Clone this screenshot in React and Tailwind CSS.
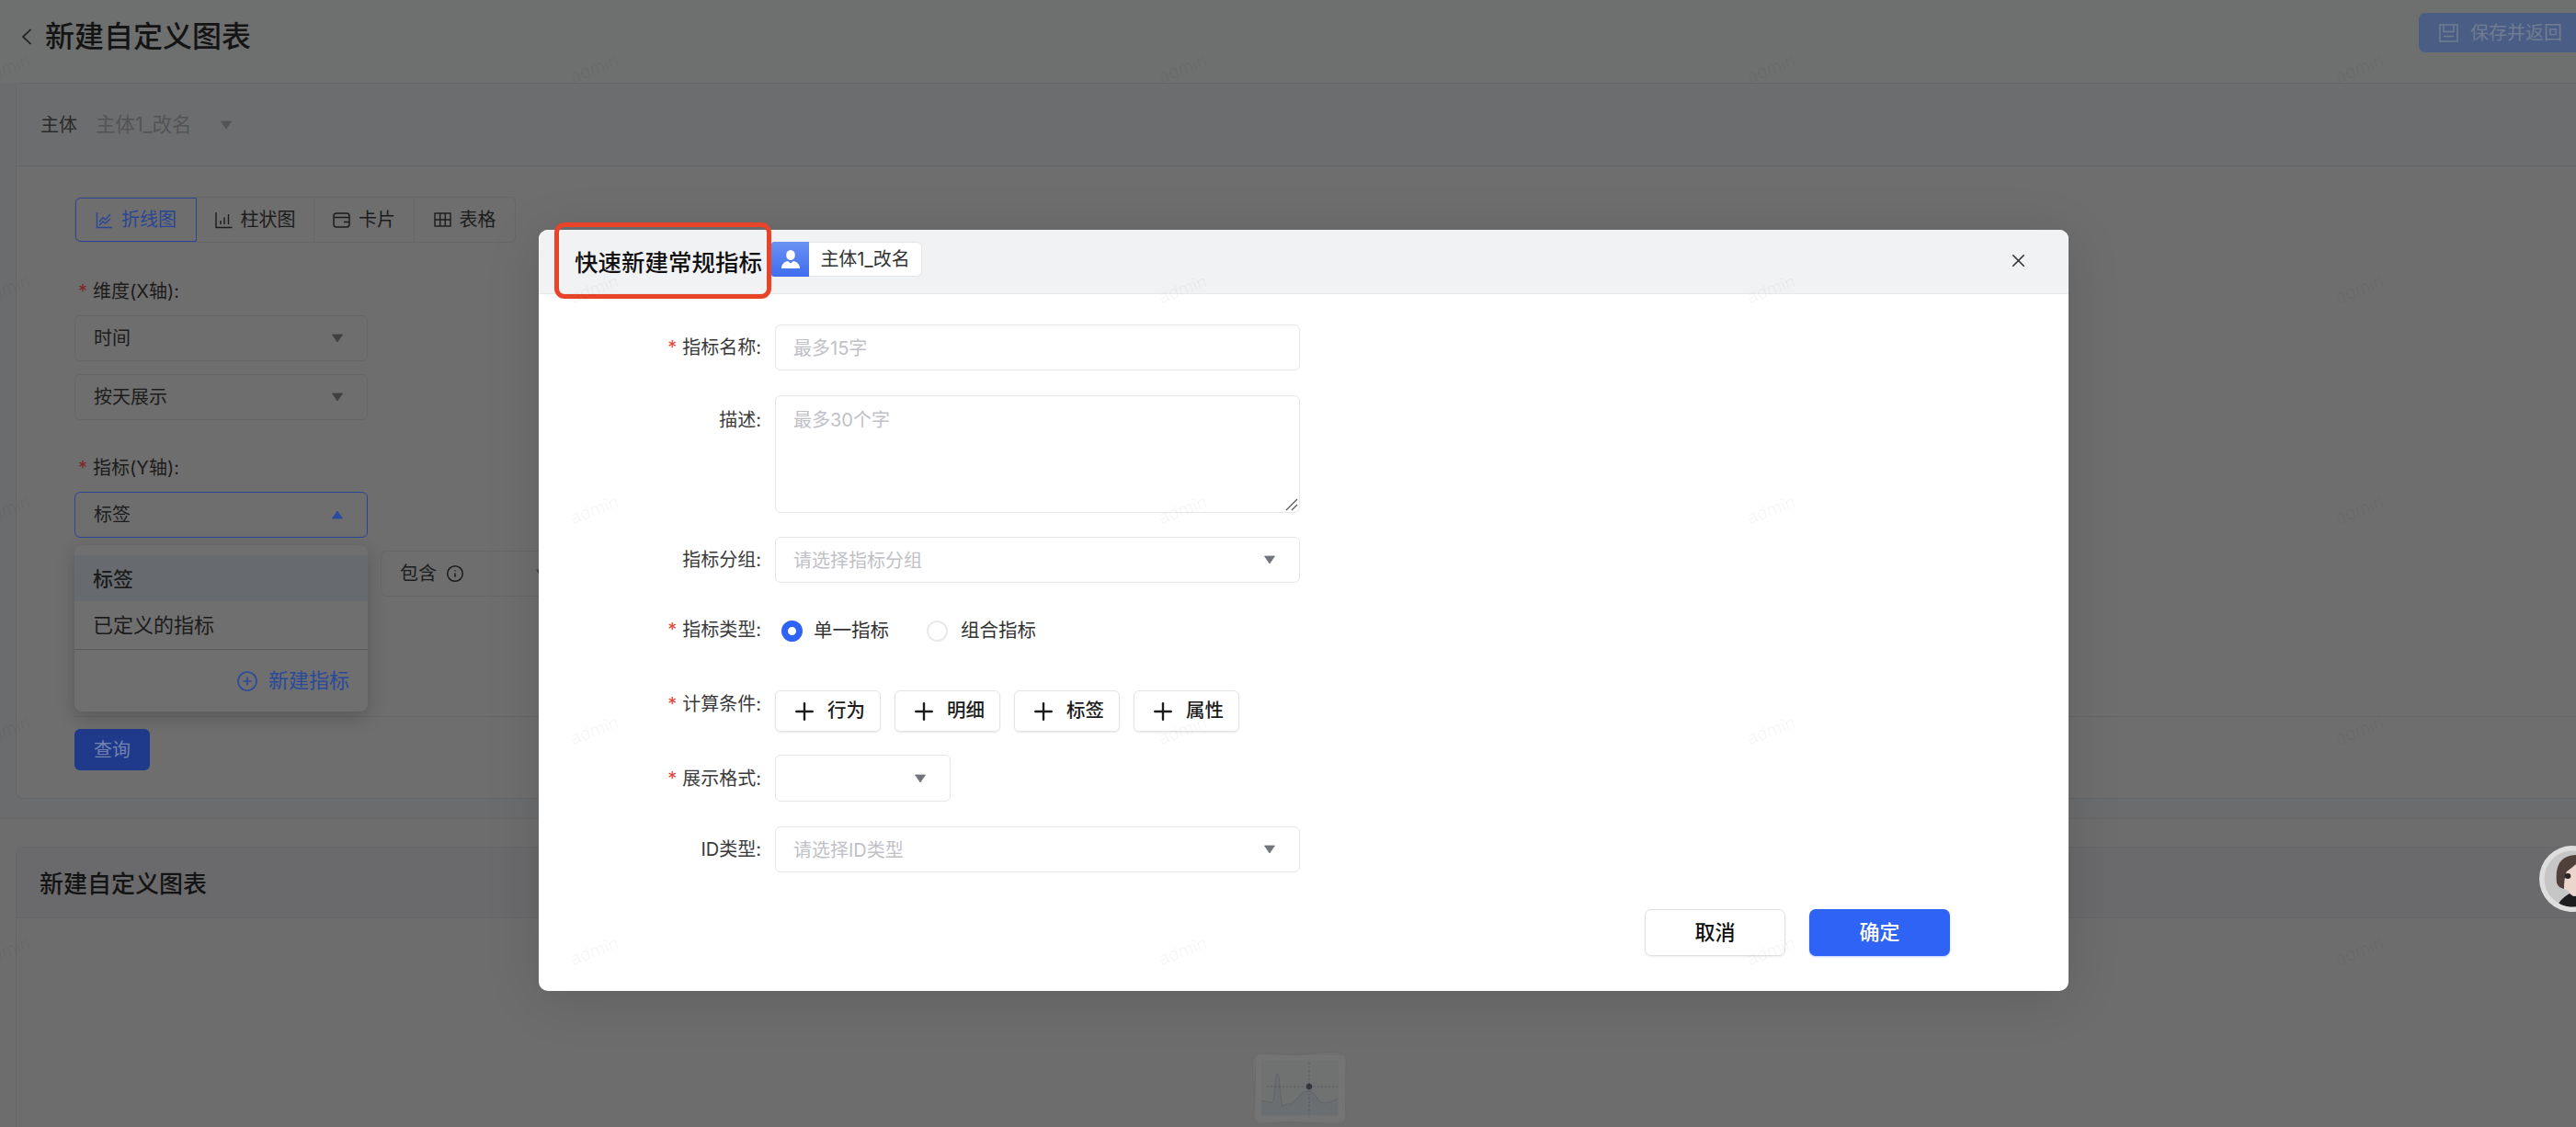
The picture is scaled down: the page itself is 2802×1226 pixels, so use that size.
import React from 'react';
import { CirclePlus, Info, Plus, X } from 'lucide-react';

function Caret({ up, className = 'text-[#4a4b4d]' }) {
  return (
    <svg width="12" height="10" viewBox="0 0 12 10" className={className}>
      <path d={up ? 'M6 1 L11.5 9 H0.5 Z' : 'M0.5 1 H11.5 L6 9 Z'} fill="currentColor" stroke="currentColor" strokeWidth="0.8" strokeLinejoin="round" />
    </svg>
  );
}

function LineIcon({ className }) {
  return (
    <svg width="19" height="19" viewBox="0 0 19 19" fill="none" stroke="currentColor" strokeWidth="1.4" className={className}>
      <path d="M1.5 1v16.5H18" />
      <path d="M4 11.5 8 6.5l2.5 2.5L16 3" />
      <path d="M4 15l4-4 2.5 2L16 8" />
    </svg>
  );
}

function BarIcon({ className }) {
  return (
    <svg width="19" height="19" viewBox="0 0 19 19" fill="none" stroke="currentColor" strokeWidth="1.4" className={className}>
      <path d="M1 1v16.5h17.5" />
      <path d="M6 14v-4M10 14V6.5M14.5 14V3" />
    </svg>
  );
}

function CardIcon({ className }) {
  return (
    <svg width="19" height="17" viewBox="0 0 19 17" fill="none" stroke="currentColor" strokeWidth="1.5" className={className}>
      <rect x="1" y="1" width="17" height="15" rx="3" />
      <path d="M1 5.5h17M12 10.5h6" />
    </svg>
  );
}

function TableIcon({ className }) {
  return (
    <svg width="19" height="16" viewBox="0 0 19 16" fill="none" stroke="currentColor" strokeWidth="1.4" className={className}>
      <rect x="1" y="1" width="17" height="14" />
      <path d="M1 8h17M6.7 1v14M12.3 1v14" />
    </svg>
  );
}

function SaveIcon() {
  return (
    <svg width="21" height="20" viewBox="0 0 21 20" fill="none" stroke="currentColor" strokeWidth="1.5">
      <path d="M1 1h19v18H1z" />
      <path d="M5 1v7.5h11V1M5 13.5h11" />
    </svg>
  );
}

function Tab({ icon, label, active, className = '' }) {
  return (
    <div className={`flex h-full items-center justify-center gap-[9px] ${active ? 'rounded-l-[6px] border border-[#2a4695] text-[#2a4695]' : 'text-[#1c1c1c]'} ${className}`}>
      {icon}
      <span>{label}</span>
    </div>
  );
}

function PageSelect({ children, up, className = '' }) {
  return (
    <div className={`flex h-[50px] w-[319px] items-center justify-between rounded-[6px] border pl-[20px] pr-[26px] text-[20px] text-[#1c1c1c] ${up ? 'border-[#2a4695]' : 'border-[#676769]'} ${className}`}>
      <span>{children}</span>
      <Caret up={up} className={up ? 'text-[#2a4aa0]' : 'text-[#3f4042]'} />
    </div>
  );
}

function Background() {
  return (
    <div className="h-[1226px] overflow-hidden bg-[#6d6d6d]">
      <div className="h-[891px] border-b border-[#656668] bg-[#6b6c6d]">
        <div className="flex h-[90px] items-start overflow-hidden bg-[#6e6f6f]">
          <div className="ml-[23px] mt-[20px] flex h-[40px] items-center text-[32px] font-medium text-[#141414]">
            <svg width="12" height="18" viewBox="0 0 12 18" fill="none" stroke="#1c1c1c" strokeWidth="1.7">
              <path d="M10.5 1 2 9l8.5 8" />
            </svg>
            <span className="ml-[14px]">新建自定义图表</span>
          </div>
          <div className="ml-auto mt-[14px] flex h-[43px] w-[171px] items-center gap-[13px] rounded-l-[7px] bg-[#4a5e85] pl-[22px] text-[20px] text-[#6f7c92]">
            <SaveIcon />
            <span>保存并返回</span>
          </div>
        </div>
        <div className="ml-[17px] h-[779px] rounded-l-[8px] border-y border-l border-[#656668] bg-[#6e6e6e]">
          <div className="flex h-[90px] items-center border-b border-[#656668] bg-[#6c6d6e] pl-[26px] text-[20px]">
            <span className="text-[#2a2a2a]">主体</span>
            <span className="ml-[20px] text-[21.5px] text-[#545454]">主体1_改名</span>
            <Caret className="ml-[31px] text-[#545454]" />
          </div>
          <div className="relative pl-[63px] pt-[33px]">
            <div className="flex h-[50px] w-[480px] items-center rounded-[6px] border border-[#676769] text-[20px]">
              <Tab active label="折线图" className="w-[132px]" icon={<LineIcon />} />
              <Tab label="柱状图" className="w-[128px] border-r border-[#676769]" icon={<BarIcon />} />
              <Tab label="卡片" className="w-[109px] border-r border-[#676769]" icon={<CardIcon />} />
              <Tab label="表格" className="flex-1" icon={<TableIcon />} />
            </div>

            <div className="mt-[39px] flex h-[28px] items-center pl-[4px] text-[20px] text-[#1c1c1c]">
              <span className="mr-[6px] text-[#7c2a24]">*</span>维度(X轴):
            </div>
            <PageSelect className="mt-[12px]">时间</PageSelect>
            <PageSelect className="mt-[14px]">按天展示</PageSelect>

            <div className="mt-[38px] flex h-[28px] items-center pl-[4px] text-[20px] text-[#1c1c1c]">
              <span className="mr-[6px] text-[#7c2a24]">*</span>指标(Y轴):
            </div>
            <div className="relative mt-[12px]">
              <PageSelect up>标签</PageSelect>
              <div className="absolute left-0 top-[58px] z-10 h-[181px] w-[319px] rounded-[8px] bg-[#6f6f6f] pt-[11px] text-[22px] text-[#1c1c1c] shadow-[0_6px_20px_rgba(0,0,0,0.2)]">
                <div className="flex h-[50px] items-center bg-[#676b6f] pl-[20px] pt-[2px] font-medium">标签</div>
                <div className="flex h-[50px] items-center pl-[20px] pt-[2px]">已定义的指标</div>
                <div className="mt-[2px] border-t border-[#5a5b5d] pr-[20px] pt-[17px]">
                  <div className="flex items-center justify-end gap-[11px] text-[22px] text-[#2a4a9a]">
                    <CirclePlus size={24} strokeWidth={1.6} />
                    <span>新建指标</span>
                  </div>
                </div>
              </div>
            </div>
            <div className="ml-[333px] mt-[14px] flex h-[50px] w-[190px] items-center rounded-[6px] border border-[#676769] pl-[20px] pr-[8px] text-[20px] text-[#1c1c1c]">
              <span>包含</span>
              <Info size={20} strokeWidth={1.8} className="ml-[10px]" />
              <Caret className="ml-auto text-[#3f4042]" />
            </div>
            <div className="mt-[130px] border-t border-[#676769]" />
            <div className="mt-[13px] flex h-[45px] w-[82px] items-center justify-center rounded-[6px] bg-[#1f3a8a] text-[20px] text-[#7283b0]">查询</div>
          </div>
        </div>
      </div>

      <div className="ml-[17px] mt-[30px] h-[400px] rounded-tl-[8px] border-l border-t border-[#656668]">
        <div className="flex h-[77px] items-center border-b border-[#656668] bg-[#6a6a6c] pl-[25px] pt-[2px] text-[26px] font-medium text-[#141414]">新建自定义图表</div>
        <div className="flex justify-center pl-[8px] pt-[143px]">
          <svg width="108" height="84" viewBox="0 0 108 84" fill="none">
            <rect x="4" y="5" width="98" height="73" rx="3" fill="#707070" stroke="#676767" strokeWidth="0.6" transform="rotate(-4 54 42)" />
            <rect x="5" y="6" width="98" height="73" rx="3" fill="#707070" stroke="#676767" strokeWidth="0.6" transform="rotate(3 54 42)" />
            <rect x="6" y="6" width="97" height="72" rx="3" fill="#747474" />
            <rect x="12" y="11.5" width="84" height="60" fill="#707171" />
            <path d="M12 56 C18 55 23 60 25 55 C27 45 27 26 29.5 26 C32 26 32 50 35 62 C38 57 43 61 46 58 C52 52 56 45 64 45 C72 45 72 58 80 58 C86 58 90 56 95 53 V71.5 H12 Z" fill="#6a6e71" />
            <path d="M12 56 C18 55 23 60 25 55 C27 45 27 26 29.5 26 C32 26 32 50 35 62 C38 57 43 61 46 58 C52 52 56 45 64 45 C72 45 72 58 80 58 C86 58 90 56 95 53" stroke="#5d6165" strokeWidth="0.8" />
            <path d="M18 40h77M64 14v56" stroke="#505357" strokeDasharray="2 2.2" strokeWidth="0.8" />
            <circle cx="64" cy="40" r="3.2" fill="#33373d" />
          </svg>
        </div>
      </div>

      <svg width="72" height="72" viewBox="0 0 72 72" className="absolute left-[2762px] top-[920px]">
        <defs>
          <clipPath id="avatar"><circle cx="36" cy="36" r="30.5" /></clipPath>
        </defs>
        <circle cx="36" cy="36" r="36" fill="#dedede" />
        <circle cx="36" cy="36" r="30.5" fill="#c6c6c6" />
        <g clipPath="url(#avatar)">
          <path d="M19 40 C17 20 24 10 42 10 L42 44 L27 47 C23 46 20 44 19 40 Z" fill="#4f403a" />
          <path d="M27 47 C27 38 28 32 30 28 C34 25 38 22 42 18 L42 54 L34 54 C34 50 30 48 27 47 Z" fill="#ecd5cd" />
          <ellipse cx="31" cy="33" rx="3.4" ry="3" fill="#2a2422" />
          <path d="M18 72 C20 60 27 56 33 52 L37 55 L42 55 L42 72 Z" fill="#1d1c1e" />
        </g>
      </svg>
    </div>
  );
}

function Field({ label, required, top, className = '', children }) {
  return (
    <div className={`flex gap-[15px] ${top ? 'items-start' : 'items-center'} ${className}`}>
      <div className={`w-[242px] text-right text-[20px] text-[#3a3a3a] ${top || ''}`}>
        {required && <span className="mr-[6px] text-[#e0463a]">*</span>}
        {label}:
      </div>
      {children}
    </div>
  );
}

function FormSelect({ placeholder, className = 'h-[50px] w-[571px]' }) {
  return (
    <div className={`flex items-center justify-between rounded-[6px] border border-[#e6e7e9] pl-[19px] pr-[26px] text-[20px] text-[#bfc1c6] ${className}`}>
      <span className="pt-[2px]">{placeholder}</span>
      <Caret className="text-[#72757b]" />
    </div>
  );
}

function AddButton({ label }) {
  return (
    <div className="flex h-[45px] w-[115px] items-center justify-center gap-[10px] rounded-[6px] border border-[#e3e4e6] text-[20.5px] font-medium text-[#1c1c1c] shadow-[0_1px_2px_rgba(0,0,0,0.1)]">
      <Plus size={30} strokeWidth={1.9} />
      <span>{label}</span>
    </div>
  );
}

function Dialog() {
  return (
    <div className="absolute left-[586px] top-[250px] h-[828px] w-[1664px] rounded-[10px] bg-white shadow-[0_8px_60px_rgba(0,0,0,0.12)]">
      <div className="relative flex h-[70px] items-center rounded-t-[10px] border-b border-[#e8e9eb] bg-[#f1f2f4] pl-[39px]">
        <span className="mt-[3px] text-[25.5px] font-medium leading-none text-[#111111]">快速新建常规指标</span>
        <div className="ml-[10px] mt-[-6px] flex h-[38px] items-stretch">
          <div className="flex w-[41px] items-center justify-center rounded-l-[3px] bg-gradient-to-b from-[#6a90f2] to-[#3f6ef0] text-white">
            <svg width="22" height="20" viewBox="0 0 22 20" fill="currentColor">
              <ellipse cx="11" cy="5.5" rx="4.8" ry="5.5" />
              <path d="M1 20 C1 14.5 5 12.5 8 12 L11 14.5 L14 12 C17 12.5 21 14.5 21 20 Z" />
            </svg>
          </div>
          <div className="flex w-[123px] items-center justify-center rounded-r-[6px] border border-l-0 border-[#e5e6e8] bg-white text-[20px] text-[#333333]">主体1_改名</div>
        </div>
        <X size={23} strokeWidth={1.7} className="ml-auto mr-[43px] mt-[-2px] text-[#333333]" />
        <div className="absolute left-[17px] top-[-8px] h-[83px] w-[236px] rounded-[11px] border-[5px] border-[#e8442a]" />
      </div>

      <div className="pt-[33px]">
        <Field label="指标名称" required>
          <div className="flex h-[50px] w-[571px] items-center rounded-[6px] border border-[#e6e7e9] pl-[19px] pt-[2px] text-[20px] text-[#bfc1c6]">最多15字</div>
        </Field>
        <Field label="描述" top="pt-[12px]" className="mt-[27px]">
          <div className="relative h-[128px] w-[571px] rounded-[6px] border border-[#e6e7e9] pl-[19px] pt-[11px] text-[20px] text-[#bfc1c6]">
            最多30个字
            <svg width="14" height="14" viewBox="0 0 14 14" className="absolute bottom-[1px] right-[1px]" stroke="#555" strokeWidth="1.2">
              <path d="M1 13 13 1M7 13l6-6" />
            </svg>
          </div>
        </Field>
        <Field label="指标分组" className="mt-[26px]">
          <FormSelect placeholder="请选择指标分组" />
        </Field>
        <Field label="指标类型" required className="mt-[29px] h-[44px]">
          <div className="flex items-center pl-[7px] pt-[2px] text-[20.5px] text-[#333333]">
            <span className="h-[23px] w-[23px] rounded-full border-[7px] border-[#2f63f5] bg-white" />
            <span className="ml-[12px]">单一指标</span>
            <span className="ml-[41px] h-[23px] w-[23px] rounded-full border-2 border-[#e8e9eb]" />
            <span className="ml-[14px]">组合指标</span>
          </div>
        </Field>
        <Field label="计算条件" required top="pt-0" className="mt-[44px]">
          <div className="flex gap-[15px]">
            <AddButton label="行为" />
            <AddButton label="明细" />
            <AddButton label="标签" />
            <AddButton label="属性" />
          </div>
        </Field>
        <Field label="展示格式" required className="mt-[25px]">
          <FormSelect placeholder="" className="h-[51px] w-[191px]" />
        </Field>
        <Field label="ID类型" className="mt-[27px]">
          <FormSelect placeholder="请选择ID类型" />
        </Field>
        <div className="mt-[40px] flex justify-end gap-[26px] pr-[129px] text-[22px] font-medium">
          <div className="flex h-[51px] w-[153px] items-center justify-center rounded-[7px] border border-[#dfe0e2] text-[#111111] shadow-[0_1px_2px_rgba(0,0,0,0.08)]">取消</div>
          <div className="flex h-[51px] w-[153px] items-center justify-center rounded-[7px] bg-[#2f63f5] text-white shadow-[0_1px_2px_rgba(47,99,245,0.3)]">确定</div>
        </div>
      </div>
    </div>
  );
}

function Watermarks() {
  const cells = Array.from({ length: 30 });
  return (
    <div className="pointer-events-none absolute left-[-313px] top-[-45px] grid grid-cols-[repeat(5,640px)] auto-rows-[240px]">
      {cells.map((_, i) => (
        <div key={i} className="flex items-center justify-center">
          <span className="-rotate-[20deg] text-[19px] font-light text-black/[0.06]">admin</span>
        </div>
      ))}
    </div>
  );
}

export default function App() {
  return (
    <div className="relative h-[1226px] w-[2802px] overflow-hidden font-['Inter','Noto_Sans_CJK_SC',sans-serif]">
      <Background />
      <Dialog />
      <Watermarks />
    </div>
  );
}
